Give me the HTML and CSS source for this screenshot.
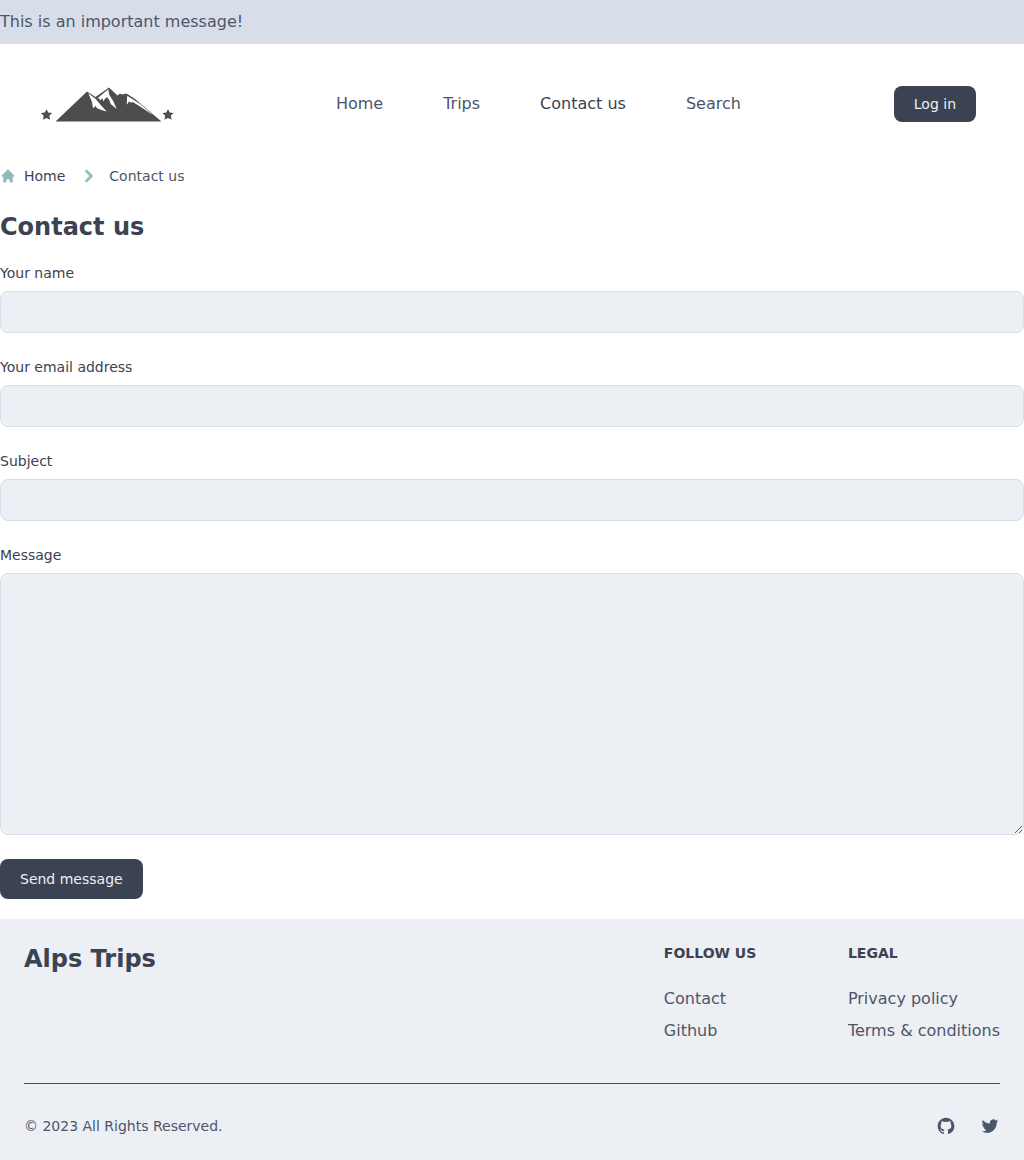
FILE: index.html
```html
<!DOCTYPE html>
<html lang="en">
<head>
<meta charset="utf-8">
<title>Contact us - Alps Trips</title>
<link rel="stylesheet" href="styles.css">
</head>
<body>
<div class="banner">This is an important message!</div>
<header class="header">
  <a class="logo" href="#" aria-label="Alps Trips">
    <svg viewBox="32 84 151 40" width="151" height="40" fill="#4d4d4f">
      <path d="M55.500 121.500 87 91.500 95.500 97 109 87.500l8.500 8 2.500-2 2 1 4.500-1 8.500 5.500 26.500 22.500z"/>
      <path fill="#fff" d="M88.300 93.300l7.200 5.500 2.700 3.200 2.300 2.800 6.200 6.700-5.200-1.500-4.800-2-1-2-2.700 2.300-1-6.300z"/>
      <path fill="#fff" d="M108.300 89.300L97.500 98.200l2.500.5-.7 2 3.400-2.400.3 3.200 2.500-3.200 1.800-1 2 2.700 1.400 4 6 5-3.400-7.700-4-6.600z"/>
      <path fill="#fff" d="M127.200 95.700l-.5 9 2.600-3.400 1.400 1.400 2-.7 6.600 4 14.200 9.500-13-11.200z"/>
      <path d="M46.500 109.200l1.700 3.400 3.900.5-2.800 2.700.8 4-3.600-1.900-3.600 1.900.8-4-2.800-2.700 3.900-.5z"/>
      <path d="M168 109.200l1.700 3.400 3.900.5-2.800 2.700.8 4-3.600-1.900-3.600 1.900.8-4-2.800-2.700 3.900-.5z"/>
    </svg>
  </a>
  <nav class="nav">
    <a href="#">Home</a>
    <a href="#">Trips</a>
    <a class="active" href="#">Contact us</a>
    <a href="#">Search</a>
  </nav>
  <a class="login" href="#">Log in</a>
</header>
<main>
  <nav class="breadcrumb" aria-label="Breadcrumb">
    <a class="crumb-home" href="#">
      <svg viewBox="0 0 20 20" width="16" height="16" fill="currentColor"><path d="M10.707 2.293a1 1 0 00-1.414 0l-7 7a1 1 0 001.414 1.414L4 10.414V17a1 1 0 001 1h2a1 1 0 001-1v-2a1 1 0 011-1h2a1 1 0 011 1v2a1 1 0 001 1h2a1 1 0 001-1v-6.586l.293.293a1 1 0 001.414-1.414l-7-7z"/></svg>
      Home
    </a>
    <span class="crumb">
      <svg viewBox="0 0 20 20" width="24" height="24" fill="currentColor" stroke="currentColor" stroke-width=".4"><path fill-rule="evenodd" d="M7.293 14.707a1 1 0 010-1.414L10.586 10 7.293 6.707a1 1 0 011.414-1.414l4 4a1 1 0 010 1.414l-4 4a1 1 0 01-1.414 0z"/></svg>
      Contact us
    </span>
  </nav>
  <h1>Contact us</h1>
  <form class="form">
    <div class="field"><label for="name">Your name</label><input id="name" type="text"></div>
    <div class="field"><label for="email">Your email address</label><input id="email" type="email"></div>
    <div class="field"><label for="subject">Subject</label><input id="subject" type="text"></div>
    <div class="field"><label for="message">Message</label><textarea id="message"></textarea></div>
    <button class="send" type="submit">Send message</button>
  </form>
</main>
<footer class="footer">
  <div class="footer-top">
    <div class="brand">Alps Trips</div>
    <div class="columns">
      <div>
        <h2>FOLLOW US</h2>
        <ul><li><a href="#">Contact</a></li><li><a href="#">Github</a></li></ul>
      </div>
      <div>
        <h2>LEGAL</h2>
        <ul><li><a href="#">Privacy policy</a></li><li><a href="#">Terms &amp; conditions</a></li></ul>
      </div>
    </div>
  </div>
  <div class="footer-bottom">
    <span>© 2023 All Rights Reserved.</span>
    <div class="social">
      <a href="#" aria-label="GitHub"><svg viewBox="0 0 24 24" width="20" height="20" fill="currentColor"><path fill-rule="evenodd" d="M12 2C6.477 2 2 6.484 2 12.017c0 4.425 2.865 8.180 6.839 9.504.5.092.682-.217.682-.483 0-.237-.008-.868-.013-1.703-2.782.605-3.369-1.343-3.369-1.343-.454-1.158-1.110-1.466-1.110-1.466-.908-.620.069-.608.069-.608 1.003.070 1.531 1.032 1.531 1.032.892 1.530 2.341 1.088 2.910.832.092-.647.350-1.088.636-1.338-2.220-.253-4.555-1.113-4.555-4.951 0-1.093.390-1.988 1.029-2.688-.103-.253-.446-1.272.098-2.650 0 0 .840-.270 2.750 1.026A9.564 9.564 0 0112 6.844c.850.004 1.705.115 2.504.337 1.909-1.296 2.747-1.027 2.747-1.027.546 1.379.202 2.398.100 2.651.640.700 1.028 1.595 1.028 2.688 0 3.848-2.339 4.695-4.566 4.943.359.309.678.920.678 1.855 0 1.338-.012 2.419-.012 2.747 0 .268.180.580.688.482A10.019 10.019 0 0022 12.017C22 6.484 17.522 2 12 2z"/></svg></a>
      <a href="#" aria-label="Twitter"><svg viewBox="0 0 24 24" width="20" height="20" fill="currentColor"><path d="M8.290 20.251c7.547 0 11.675-6.253 11.675-11.675 0-.178 0-.355-.012-.530A8.348 8.348 0 0022 5.920a8.190 8.190 0 01-2.357.646 4.118 4.118 0 001.804-2.270 8.224 8.224 0 01-2.605.996 4.107 4.107 0 00-6.993 3.743 11.650 11.650 0 01-8.457-4.287 4.106 4.106 0 001.270 5.477A4.072 4.072 0 012.800 9.713v.052a4.105 4.105 0 003.292 4.022 4.095 4.095 0 01-1.853.070 4.108 4.108 0 003.834 2.850A8.233 8.233 0 012 18.407a11.616 11.616 0 006.290 1.840"/></svg></a>
    </div>
  </div>
</footer>
</body>
</html>
```
FILE: styles.css
```css
* { box-sizing: border-box; }
body {
  margin: 0;
  background: #fff;
  color: #4c566a;
  font: 16px/24px "DejaVu Sans", sans-serif;
}
a { color: inherit; text-decoration: none; }
svg { display: block; }
.banner { padding: 10px 0; background: #d8dee9; }
.header {
  display: flex;
  align-items: center;
  justify-content: space-between;
  height: 120px;
  padding: 0 48px 0 32px;
}
.nav { display: flex; gap: 60px; }
.nav .active { color: #3b4252; }
.login {
  padding: 8px 20px;
  border-radius: 8px;
  background: #3b4252;
  color: #eceff4;
  font-size: 14px;
  line-height: 20px;
}
.breadcrumb {
  display: flex;
  align-items: center;
  gap: 12px;
  font-size: 14px;
  line-height: 20px;
}
.crumb-home, .crumb { display: flex; align-items: center; gap: 8px; }
.crumb-home { color: #3b4252; }
.breadcrumb svg { color: #8fbcbb; }
h1, .brand {
  color: #3b4252;
  font-size: 24px;
  font-weight: 700;
  line-height: 32px;
}
h1 { margin: 23px 0 20px; }
.form { display: flex; flex-direction: column; gap: 24px; }
.field { display: flex; flex-direction: column; gap: 8px; }
label { color: #3b4252; font-size: 14px; line-height: 20px; }
input, textarea {
  width: 100%;
  height: 42px;
  margin: 0;
  padding: 10px;
  border: 1px solid #d8dee9;
  border-radius: 8px;
  background: #eceff4;
  font: inherit;
}
textarea { height: 262px; }
.send {
  align-self: flex-start;
  padding: 10px 20px;
  border: 0;
  border-radius: 8px;
  background: #3b4252;
  color: #eceff4;
  font: 14px/20px "DejaVu Sans", sans-serif;
}
.footer { margin-top: 20px; padding: 24px; background: #eceff4; }
.footer-top {
  display: flex;
  justify-content: space-between;
  padding-bottom: 40px;
  border-bottom: 1px solid #434c5e;
}
.columns { display: grid; grid-template-columns: 1fr 1fr; gap: 32px; }
h2 { margin: 0 0 24px; color: #3b4252; font-size: 14px; line-height: 20px; }
ul {
  display: flex;
  flex-direction: column;
  gap: 8px;
  margin: 0;
  padding: 0;
  list-style: none;
}
.footer-bottom {
  display: flex;
  justify-content: space-between;
  padding-top: 32px;
  font-size: 14px;
  line-height: 20px;
}
.social { display: flex; gap: 24px; }
```
